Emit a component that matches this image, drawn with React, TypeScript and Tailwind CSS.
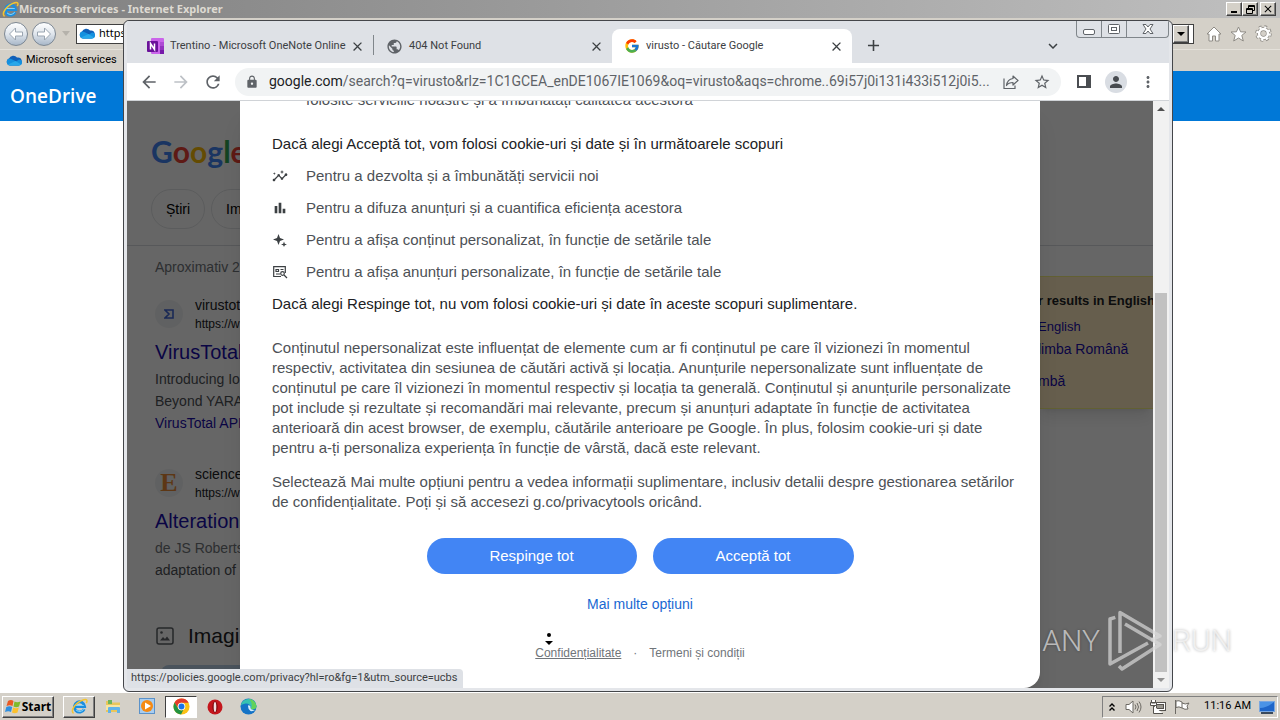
import React from 'react';
import {
  MdAdd,
  MdArrowBack,
  MdArrowForward,
  MdBarChart,
  MdClose,
  MdExpandMore,
  MdInsights,
  MdLock,
  MdMoreVert,
  MdPerson,
  MdPublic,
  MdRefresh,
  MdStarBorder,
} from 'react-icons/md';
import { FcGoogle } from 'react-icons/fc';

const CloudIcon = () => (
  <svg width="16" height="11" viewBox="0 0 16 11" className="shrink-0">
    <path d="M4 10.5A3.6 3.6 0 0 1 3 3.6 4.6 4.6 0 0 1 11 2.6 4 4 0 0 1 12.5 10.5Z" fill="#0f5fb8" />
    <path d="M4 10.5A3.6 3.6 0 0 1 3.2 3.5C6 4 8 5 10 6.5L13 4.5A3 3 0 0 1 13 10.5Z" fill="#1490df" />
    <path d="M2 9.5 9.5 6 14.8 9.3Q14 10.5 12.8 10.5H4Q2.8 10.5 2 9.5Z" fill="#28a8ea" />
  </svg>
);

const IeIcon = ({ size }: { size: number }) => (
  <svg width={size} height={size} viewBox="0 0 20 20" fill="none" className="shrink-0">
    <path d="M15.5 13A6 6 0 1 1 16 10H5" stroke="#1b8ee0" strokeWidth="3.4" />
    <path d="M15 12.8A5.5 5.5 0 0 1 6 14M5 8.8H15" stroke="#7fd0f8" strokeWidth="1.2" />
    <path d="M3 18C-1 15 5 5 15 2 19 1 19.5 3 18 6" stroke="#f4c430" strokeWidth="1.7" />
  </svg>
);

const OneNoteIcon = () => (
  <svg width="17" height="17" viewBox="0 0 17 17" className="shrink-0">
    <rect x="4" y="0" width="13" height="16" rx="1" fill="#ca64ea" />
    <rect x="13" y="4" width="4" height="4" fill="#ae4bd5" />
    <rect x="13" y="8" width="4" height="4" fill="#9332bf" />
    <rect x="13" y="12" width="4" height="4" fill="#7719aa" />
    <rect x="0" y="3" width="11" height="11" rx="1" fill="#6a1199" />
    <path d="M3.5 11.5V5.5L7.5 11.5V5.5" stroke="#fff" strokeWidth="1.5" fill="none" />
  </svg>
);

const ShareIcon = () => (
  <svg width="16" height="16" viewBox="0 0 16 16" fill="none" stroke="#5f6368" strokeWidth="1.2">
    <path d="M1 4.5V14.5H12V11.5" />
    <path d="M10 2 15 6.500 10 11V8.500C7 8.500 5 9.300 3.500 11.500 4 7.500 6 5 10 4.500Z" strokeLinejoin="round" />
  </svg>
);

const SparkIcon = () => (
  <svg width="16" height="16" viewBox="0 0 16 16" fill="#3c4043">
    <path d="M6.500 2 8 6 12 7.500 8 9 6.500 13 5 9 1 7.500 5 6Z" />
    <path d="M12 9.500 12.800 11.700 15 12.500 12.800 13.300 12 15 11.200 13.300 9 12.500 11.200 11.700Z" />
  </svg>
);

const AdSearchIcon = () => (
  <svg width="16" height="16" viewBox="0 0 16 16" fill="none" stroke="#3c4043" strokeWidth="1.2">
    <path d="M9 12.500H1.700V2.700H13.300V9" />
    <path d="M4 5.500H6.500V7.500H4ZM8.500 5.500H11.500M4 10H8" />
    <circle cx="10.500" cy="9.500" r="1.800" />
    <path d="M12 11 15 14" />
  </svg>
);

const PictureIcon = () => (
  <svg width="18" height="18" viewBox="0 0 18 18" fill="none" stroke="#5f6368" strokeWidth="1.5">
    <rect x="1" y="1" width="16" height="16" rx="2" />
    <path d="M4 13.500 7 10 9 12 11 9.500 14 13.500Z" fill="#5f6368" stroke="none" />
    <circle cx="5.500" cy="5.500" r="1.300" fill="#5f6368" stroke="none" />
  </svg>
);

const WindowsIcon = () => (
  <svg width="17" height="17" viewBox="0 0 17 17">
    <path d="M3 3Q6 1 8.500 3L7.500 8Q5 6.500 1.500 8Z" fill="#ea5a24" />
    <path d="M9.500 3.500Q12 5 15.500 3.500L14 8.500Q11 10 8.500 8.500Z" fill="#7fba2c" />
    <path d="M1.300 9Q4.500 7.500 7.200 9L6 14Q3.500 12.500 0 14Z" fill="#2f8fe0" />
    <path d="M8.200 9.500Q11 11 13.800 9.500L12.500 14.500Q9.500 16 7 14.500Z" fill="#fbc02d" />
  </svg>
);

const FolderIcon = () => (
  <svg width="17" height="17" viewBox="0 0 17 17">
    <path d="M1 3H6L7 4.500H15V14H1Z" fill="#e9c65a" />
    <path d="M3 2H7V6H3Z" fill="#6fb559" />
    <path d="M1 7H15V12H1Z" fill="#f8e6a0" />
    <path d="M3 15V10Q3 9 4 9H14Q15 9 15 10V15H12V12H6V15Z" fill="#62b3e8" />
  </svg>
);

const MediaIcon = () => (
  <svg width="17" height="17" viewBox="0 0 17 17">
    <rect x="0.5" y="0.5" width="15" height="15" fill="#a8cdf0" stroke="#5b92c9" />
    <circle cx="8" cy="8" r="6" fill="#f58a13" />
    <path d="M6 4.500 12 8 6 11.500Z" fill="#fff" />
  </svg>
);

const ChromeIcon = () => (
  <svg width="17" height="17" viewBox="0 0 18 18">
    <circle cx="9" cy="9" r="8.5" fill="#fbc116" />
    <path d="M1.600 4.800A8.500 8.500 0 0 1 16.600 5H9A4 4 0 0 0 5.300 11Z" fill="#e33b2e" />
    <path d="M1.600 4.800 5.500 11A4 4 0 0 0 11 12.500L8.500 17.500A8.500 8.500 0 0 1 1.600 4.800Z" fill="#229342" />
    <circle cx="9" cy="9" r="4" fill="#fff" />
    <circle cx="9" cy="9" r="3.1" fill="#1a73e8" />
  </svg>
);

const OperaIcon = () => (
  <svg width="16" height="16" viewBox="0 0 16 16">
    <circle cx="8" cy="8" r="7.5" fill="#c4161c" />
    <ellipse cx="8" cy="8" rx="2.6" ry="5.8" fill="#7d0a0e" />
    <ellipse cx="8" cy="8" rx="1.3" ry="5" fill="#f3dede" />
  </svg>
);

const EdgeIcon = () => (
  <svg width="17" height="17" viewBox="0 0 17 17">
    <circle cx="8.5" cy="8.5" r="8" fill="#1573c6" />
    <path d="M0.600 8A8 8 0 0 1 16.500 8C16.500 11 13.500 12 10.500 11 12 8 9 5 5.500 5.500 3 6 1 7 0.600 8Z" fill="#37c2b1" />
    <path d="M9 1A8 8 0 0 1 16.500 8C16.500 10.500 14 12 11 11 13 7 11 3 9 1Z" fill="#63d25b" />
    <path d="M8 8Q8 7 9.500 7.500 11 8 10.500 10 11 12 15 12 13 13.500 10.500 13 8 11.500 8 8Z" fill="#d8eefb" />
  </svg>
);

const NavArrow = ({ label, flip }: { label: string; flip?: boolean }) => (
  <button
    aria-label={label}
    className="flex h-6 w-6 items-center justify-center rounded-full border border-[#7d8894] bg-linear-to-b from-white via-[#dfe5ec] to-[#a9b8c9]"
  >
    <svg width="16" height="14" viewBox="0 0 16 14" className={flip ? 'rotate-180' : ''}>
      <path d="M7.500 1 1.500 7 7.500 13V9H14.500V5H7.500Z" fill="#fff" stroke="#9aa5b1" />
    </svg>
  </button>
);

const classicButton =
  'flex items-center justify-center border border-t-white border-l-white border-r-[#404040] border-b-[#404040] bg-[#d4d0c8] shadow-[inset_-1px_-1px_0_#808080]';

const IeWindow = () => (
  <section className="flex min-h-0 flex-1 flex-col bg-white">
    <header className="flex h-[18px] items-center bg-linear-to-r from-[#808080] to-[#c0c0c0] pr-1 pl-0.5">
      <IeIcon size={17} />
      <h1 className="flex-1 font-['Noto_Sans',sans-serif] text-[11px] leading-4 font-bold text-[#dedad2]">
        Microsoft services - Internet Explorer
      </h1>
      <button aria-label="Minimize" className={`${classicButton} h-3.5 w-4`}>
        <span className="mt-1.5 h-0.5 w-1.5 bg-black" />
      </button>
      <button aria-label="Restore" className={`${classicButton} h-3.5 w-4`}>
        <svg width="9" height="9" viewBox="0 0 9 9" fill="none" stroke="#000">
          <path d="M2.500 3V.5H8.500V5.500H6.500M2.500 1.500H8.500M.5 3.500H6.500V8.500H.5ZM.5 4.500H6.500" />
        </svg>
      </button>
      <button aria-label="Close" className={`${classicButton} ml-0.5 h-3.5 w-4`}>
        <MdClose size={12} />
      </button>
    </header>
    <nav className="flex h-[31px] items-center bg-[#d4d0c8] pr-2 pl-1">
      <div className="flex gap-1">
        <NavArrow label="Back" />
        <NavArrow label="Forward" flip />
      </div>
      <span className="mx-1.5 h-0 w-0 border-x-4 border-t-5 border-x-transparent border-t-[#b5b2ab]" />
      <div className="mr-3 flex h-5 flex-1 items-center gap-1 border border-[#404040] bg-white pl-0.5">
        <CloudIcon />
        <input
          aria-label="Address"
          defaultValue="https://onedrive.live.com"
          className="min-w-0 flex-1 font-['Noto_Sans',sans-serif] text-[11px] outline-none"
        />
        <button aria-label="Show addresses" className={`${classicButton} mr-1 h-[18px] w-4`}>
          <span className="h-0 w-0 border-x-4 border-t-4 border-x-transparent border-t-black" />
        </button>
      </div>
      <div className="flex gap-2">
        <button aria-label="Home">
          <svg width="16" height="16" viewBox="0 0 16 16" fill="#fff" stroke="#8e8b85">
            <path d="M8 1 15 8H13V15H9.500V10H6.500V15H3V8H1Z" />
          </svg>
        </button>
        <button aria-label="Favorites">
          <svg width="17" height="16" viewBox="0 0 17 16" fill="#fff" stroke="#8e8b85">
            <path d="M8.500 1 10.600 5.800 16 6 11.800 9.400 13.300 15 8.500 12 3.700 15 5.200 9.400 1 6 6.400 5.800Z" />
          </svg>
        </button>
        <button aria-label="Tools">
          <svg width="17" height="17" viewBox="0 0 17 17" fill="none">
            <circle cx="8.5" cy="8.5" r="6.5" stroke="#8e8b85" strokeWidth="3.5" strokeDasharray="2.6 2.5" />
            <circle cx="8.5" cy="8.5" r="4.5" stroke="#8e8b85" strokeWidth="4" />
            <circle cx="8.5" cy="8.5" r="6.3" stroke="#fff" strokeWidth="2.2" strokeDasharray="2.2 2.75" />
            <circle cx="8.5" cy="8.5" r="4.4" stroke="#fff" strokeWidth="2.5" />
          </svg>
        </button>
      </div>
    </nav>
    <div className="flex h-[22px] items-center gap-1 border-t border-[#e4e1da] bg-[#d4d0c8] pl-1.5">
      <CloudIcon />
      <a href="#onedrive" className="font-['Roboto',sans-serif] text-[11px] text-black">
        Microsoft services
      </a>
    </div>
    <div className="flex h-[50px] items-center bg-[#0078d7] pl-2.5 font-['Open_Sans',sans-serif] text-[19px] font-semibold text-white">
      OneDrive
    </div>
  </section>
);

interface TabProps {
  icon: React.ReactNode;
  title: string;
  active?: boolean;
}

const Tab = ({ icon, title, active }: TabProps) => (
  <div
    className={
      active
        ? 'flex h-[34px] w-60 items-center rounded-t-lg bg-white pr-2 pl-3'
        : 'flex h-[34px] w-[238px] items-center pr-2 pl-3'
    }
  >
    {icon}
    <span className="ml-1.5 flex-1 whitespace-nowrap">{title}</span>
    <button aria-label="Close tab">
      <MdClose size={15} color="#3c4043" />
    </button>
  </div>
);

const ChromeHeader = () => (
  <header>
    <div className="flex h-[42px] items-end bg-[#dee1e6] pl-2 font-['Roboto',sans-serif] text-[11px] text-[#3c4043]">
      <Tab icon={<OneNoteIcon />} title="Trentino - Microsoft OneNote Online" />
      <span className="mb-2 h-5 w-px bg-[#80868b]" />
      <Tab icon={<MdPublic size={17} color="#5f6368" />} title="404 Not Found" />
      <Tab icon={<FcGoogle size={16} />} title="virusto - Căutare Google" active />
      <button aria-label="New tab" className="mb-2 ml-3">
        <MdAdd size={19} />
      </button>
      <div className="flex-1" />
      <button aria-label="Search tabs" className="mr-3.5 mb-2">
        <MdExpandMore size={18} />
      </button>
      <div className="flex h-[17px] self-start rounded-b-sm border border-t-0 border-[#80868b]">
        <button aria-label="Minimize" className="flex w-[25px] items-center justify-center border-r border-[#80868b]">
          <span className="mt-1.5 h-1.5 w-3 rounded-xs border border-[#5f6368] bg-white" />
        </button>
        <button aria-label="Maximize" className="flex w-[25px] items-center justify-center border-r border-[#80868b]">
          <svg width="12" height="10" viewBox="0 0 12 10" fill="#fff" stroke="#5f6368">
            <rect x="0.5" y="0.5" width="11" height="9" rx="1" />
            <rect x="3.5" y="3.5" width="5" height="3" />
          </svg>
        </button>
        <button aria-label="Close" className="flex w-[41px] items-center justify-center">
          <svg width="12" height="10" viewBox="0 0 12 10" fill="#fff" stroke="#5f6368">
            <path d="M1 .5H4L6 3 8 .5H11L8 5 11 9.500H8L6 7 4 9.500H1L4 5Z" />
          </svg>
        </button>
      </div>
    </div>
    <div className="flex h-[38px] items-center border-b border-[#d0d3d7] bg-white px-3 text-[#5f6368]">
      <div className="flex gap-3">
        <button aria-label="Back">
          <MdArrowBack size={20} />
        </button>
        <button aria-label="Forward">
          <MdArrowForward size={20} color="#bdc1c6" />
        </button>
        <button aria-label="Reload">
          <MdRefresh size={20} />
        </button>
      </div>
      <div className="ml-3 flex h-7 min-w-0 flex-1 items-center rounded-full bg-[#f1f3f4] px-2.5">
        <MdLock size={14} />
        <div className="ml-2.5 flex-1 font-['Roboto',sans-serif] text-[14px] whitespace-nowrap">
          <span className="text-[#202124]">google.com</span>
          /search?q=virusto&amp;rlz=1C1GCEA_enDE1067IE1069&amp;oq=virusto&amp;aqs=chrome..69i57j0i131i433i512j0i5...
        </div>
        <button aria-label="Share" className="mr-3.5">
          <ShareIcon />
        </button>
        <button aria-label="Bookmark">
          <MdStarBorder size={18} />
        </button>
      </div>
      <button aria-label="Side panel" className="ml-4">
        <svg width="14" height="13" viewBox="0 0 14 13">
          <path d="M0 0H14V13H0ZM2 2V11H9V2Z" fill="#4a4d51" fillRule="evenodd" />
        </svg>
      </button>
      <button aria-label="Profile" className="ml-3.5 flex h-[22px] w-[22px] items-center justify-center rounded-full bg-[#d9dde3]">
        <MdPerson size={18} color="#474b50" />
      </button>
      <button aria-label="Menu" className="ml-3">
        <MdMoreVert size={18} />
      </button>
    </div>
  </header>
);

const SearchResults = () => (
  <div className="flex h-full flex-col overflow-hidden bg-white text-[14px] whitespace-nowrap">
    <div className="border-b border-[#dadce0]">
      <div className="w-[113px] overflow-hidden pl-6">
        <div className="flex h-[88px] items-end pb-[18px] font-['Lato',sans-serif] text-[30px] leading-10 font-bold">
          <span className="text-[#4285f4]">G</span>
          <span className="text-[#ea4335]">o</span>
          <span className="text-[#fbbc05]">o</span>
          <span className="text-[#4285f4]">g</span>
          <span className="text-[#34a853]">l</span>
          <span className="text-[#ea4335]">e</span>
        </div>
        <div className="flex gap-1.5 pb-4 text-black">
          <button className="h-10 w-[54px] shrink-0 rounded-full border border-[#e4e6e8]">Știri</button>
          <button className="h-10 w-20 shrink-0 rounded-full border border-[#e4e6e8] pl-3.5 text-left">Im</button>
        </div>
      </div>
    </div>
    <div className="flex min-h-0 flex-1 justify-between">
      <div className="w-[113px] overflow-hidden pt-[11px] pl-7 text-[#4d5156]">
        <p className="leading-5 text-[#70757a]">Aproximativ 2</p>
        <article className="pt-[18px]">
          <div className="flex items-center gap-3">
            <span className="flex h-7 w-7 shrink-0 items-center justify-center rounded-full bg-[#f1f3f4]">
              <svg width="10" height="10" viewBox="0 0 10 10" fill="none" stroke="#4066d5" strokeWidth="1.6">
                <path d="M1 1H9V9H1L5 5Z" />
              </svg>
            </span>
            <div className="text-[#202124]">
              <p className="leading-5">virustot</p>
              <p className="text-[12px] leading-[18px]">https://w</p>
            </div>
          </div>
          <h3 className="mt-1.5 text-[20px] leading-[26px] text-[#1a0dab]">VirusTotal</h3>
          <p className="mt-[3px] leading-[22px]">Introducing Io</p>
          <p className="leading-[22px]">Beyond YARA</p>
          <a href="#api" className="leading-[22px] text-[#1a0dab]">
            VirusTotal API
          </a>
        </article>
        <article className="pt-[30px]">
          <div className="flex items-center gap-3">
            <span className="flex h-7 w-7 shrink-0 items-center justify-center rounded-full bg-[#f1f3f4] font-['Liberation_Serif',serif] text-[26px] leading-7 font-bold text-[#e98a35]">
              E
            </span>
            <div className="text-[#202124]">
              <p className="leading-5">science</p>
              <p className="text-[12px] leading-[18px]">https://w</p>
            </div>
          </div>
          <h3 className="mt-1.5 text-[20px] leading-[26px] text-[#1a0dab]">Alterations</h3>
          <p className="mt-[3px] leading-[22px] text-[#70757a]">de JS Roberts</p>
          <p className="leading-[22px]">adaptation of</p>
        </article>
        <div className="mt-[42px] flex items-center gap-3.5 pl-px">
          <PictureIcon />
          <h3 className="text-[21px] leading-[26px] text-[#202124]">Imagi</h3>
        </div>
        <div className="mt-4 ml-1.5 h-10 w-40 rounded-lg bg-[#b8cfe6]" />
      </div>
      <aside className="mt-[30px] h-[133px] w-[115px] border-y border-[#f5ef80] bg-[#ffecc0] pt-4 shadow-lg">
        <p className="text-[13px] leading-4 font-bold text-[#202124]">r results in English</p>
        <div className="flex flex-col items-start text-[#1a0dab]">
          <a href="#en" className="mt-2 text-[13px] leading-5">
            English
          </a>
          <a href="#ro" className="leading-6">
            limba Română
          </a>
          <a href="#lang" className="mt-2 leading-6">
            mbă
          </a>
        </div>
      </aside>
    </div>
  </div>
);

const purposes = [
  { icon: <MdInsights size={16} color="#3c4043" />, text: 'Pentru a dezvolta și a îmbunătăți servicii noi' },
  { icon: <MdBarChart size={16} color="#3c4043" />, text: 'Pentru a difuza anunțuri și a cuantifica eficiența acestora' },
  { icon: <SparkIcon />, text: 'Pentru a afișa conținut personalizat, în funcție de setările tale' },
  { icon: <AdSearchIcon />, text: 'Pentru a afișa anunțuri personalizate, în funcție de setările tale' },
];

const ConsentDialog = () => (
  <div role="dialog" aria-label="Cookie" className="w-[800px] rounded-b-2xl bg-white px-8 pb-[25px] text-[15px] leading-5 text-[#4d5156] shadow-xl">
    <div className="flex h-[9px] items-end overflow-hidden pl-[34px]">
      <p>folosite serviciile noastre și a îmbunătăți calitatea acestora</p>
    </div>
    <p className="mt-6 text-[#202124]">Dacă alegi Acceptă tot, vom folosi cookie-uri și date și în următoarele scopuri</p>
    <ul className="my-3 flex flex-col gap-3">
      {purposes.map((item) => (
        <li key={item.text} className="flex items-center gap-[18px]">
          {item.icon}
          <span>{item.text}</span>
        </li>
      ))}
    </ul>
    <p className="text-[#202124]">Dacă alegi Respinge tot, nu vom folosi cookie-uri și date în aceste scopuri suplimentare.</p>
    <p className="mt-6 whitespace-nowrap">
      Conținutul nepersonalizat este influențat de elemente cum ar fi conținutul pe care îl vizionezi în momentul
      <br />
      respectiv, activitatea din sesiunea de căutări activă și locația. Anunțurile nepersonalizate sunt influențate de
      <br />
      conținutul pe care îl vizionezi în momentul respectiv și locația ta generală. Conținutul și anunțurile personalizate
      <br />
      pot include și rezultate și recomandări mai relevante, precum și anunțuri adaptate în funcție de activitatea
      <br />
      anterioară din acest browser, de exemplu, căutările anterioare pe Google. În plus, folosim cookie-uri și date
      <br />
      pentru a-ți personaliza experiența în funcție de vârstă, dacă este relevant.
    </p>
    <p className="mt-3.5 whitespace-nowrap">
      Selectează Mai multe opțiuni pentru a vedea informații suplimentare, inclusiv detalii despre gestionarea setărilor
      <br />
      de confidențialitate. Poți și să accesezi g.co/privacytools oricând.
    </p>
    <div className="mt-[26px] flex justify-center gap-4 text-white">
      <button className="h-9 w-[210px] rounded-full bg-[#4285f4]">Respinge tot</button>
      <button className="h-9 w-[201px] rounded-full bg-[#4285f4]">Acceptă tot</button>
    </div>
    <div className="mt-5 flex justify-center">
      <a href="#more" className="text-[14px] text-[#1967d2]">
        Mai multe opțiuni
      </a>
    </div>
    <footer className="mt-[29px] flex justify-center gap-3 text-[12px] text-[#70757a]">
      <a href="#privacy" className="relative underline">
        Confidențialitate
        <svg width="8" height="12" viewBox="0 0 8 12" className="absolute -top-2.5 left-2.5">
          <circle cx="4" cy="2" r="2" />
          <path d="M0 8H8L4 12Z" />
        </svg>
      </a>
      <span>·</span>
      <a href="#terms">Termeni și condiții</a>
    </footer>
  </div>
);

const ChromeWindow = () => (
  <section className="absolute top-5 right-[107px] bottom-7 left-[123px] flex flex-col overflow-hidden rounded-md border border-[#44464a] bg-[#e4e6ea] px-[3px] pb-[3px]">
    <ChromeHeader />
    <div className="flex min-h-0 flex-1">
      <main className="relative min-w-0 flex-1 overflow-hidden">
        <SearchResults />
        <div className="absolute inset-0 flex items-start justify-center bg-black/60">
          <ConsentDialog />
        </div>
        <div className="absolute bottom-0 left-0 flex h-[19px] w-[336px] items-center rounded-tr-sm bg-[#dee1e6] pl-1 font-['Roboto',sans-serif] text-[11px] whitespace-nowrap text-[#3c4043]">
          https://policies.google.com/privacy?hl=ro&amp;fg=1&amp;utm_source=ucbs
        </div>
      </main>
      <div className="flex w-4 flex-col items-center bg-[#f1f1f1] py-1.5">
        <span className="h-0 w-0 border-x-4 border-b-4 border-x-transparent border-b-[#505050]" />
        <span className="flex-1" />
        <span className="mb-1.5 h-[66%] w-3 bg-[#c1c1c1]" />
        <span className="h-0 w-0 border-x-4 border-t-4 border-x-transparent border-t-[#909090]" />
      </div>
    </div>
  </section>
);

const Taskbar = () => (
  <footer className="flex h-[27px] items-center bg-[#d4d0c8] px-0.5 font-['Noto_Sans',sans-serif] text-black">
    <button className={`${classicButton} h-[22px] w-[52px] text-[12px] font-bold`}>
      <WindowsIcon />
      Start
    </button>
    <button aria-label="Internet Explorer" className={`${classicButton} ml-[9px] h-[22px] w-8`}>
      <IeIcon size={17} />
    </button>
    <button aria-label="Explorer" className="ml-2.5">
      <FolderIcon />
    </button>
    <button aria-label="Media Player" className="ml-[17px]">
      <MediaIcon />
    </button>
    <button
      aria-label="Chrome"
      className="ml-[9px] flex h-[22px] w-8 items-center justify-center border border-t-[#404040] border-r-white border-b-white border-l-[#404040] bg-white"
    >
      <ChromeIcon />
    </button>
    <button aria-label="Opera" className="ml-2.5">
      <OperaIcon />
    </button>
    <button aria-label="Edge" className="ml-[17px]">
      <EdgeIcon />
    </button>
    <div className="ml-auto flex h-[22px] items-center border border-t-[#808080] border-r-white border-b-white border-l-[#808080] pr-0.5 pl-1.5">
      <svg width="6" height="8" viewBox="0 0 6 8" fill="none" stroke="#000" strokeWidth="1.4">
        <path d="M.5 3.500 3 1 5.500 3.500M.5 7.500 3 5 5.500 7.500" />
      </svg>
      <svg width="17" height="16" viewBox="0 0 17 16" className="ml-2.5" fill="#fff" stroke="#6d6a64">
        <path d="M1 5.500H4L8 2V14L4 10.500H1Z" />
        <path d="M10 5.500Q12 8 10 10.500M12 4Q15 8 12 12M14 2.500Q18 8 14 13.500" fill="none" />
      </svg>
      <svg width="16" height="16" viewBox="0 0 16 16" className="ml-2" fill="#fff" stroke="#55524d">
        <rect x="4.5" y="3.5" width="11" height="8" />
        <rect x="6.5" y="5.5" width="7" height="4" fill="#9a978f" />
        <path d="M1.500 1V4H5.500V1M.5 3.500H6.500V6.500H.5ZM3.500 7V14.500H13" />
      </svg>
      <svg width="16" height="16" viewBox="0 0 16 16" className="ml-2" fill="#fff" stroke="#6d6a64">
        <path d="M1.500 1V15M2 2Q5 1 8 3V9Q5 7 2 8.500ZM8 4Q11 6 15 4L13 7 14 10Q11 11 8 9" />
      </svg>
      <time className="ml-3.5 font-['Roboto',sans-serif] text-[11px]">11:16 AM</time>
      <svg width="16" height="14" viewBox="0 0 16 14" className="ml-2">
        <rect x="0.5" y="1.5" width="15" height="10" fill="#1f66c9" stroke="#7aa7df" />
        <path d="M1 8Q8 8 15 2V2H1Z" fill="#4a93e6" />
        <rect x="2" y="12" width="12" height="2" fill="#3b4a5c" />
      </svg>
    </div>
  </footer>
);

const Watermark = () => (
  <div className="pointer-events-none absolute right-12 bottom-[48px] flex items-center gap-2 font-['Roboto',sans-serif] text-[30px] leading-none font-light text-white/60 [text-shadow:0_0_3px_rgba(0,0,0,0.3)]">
    <span>ANY</span>
    <svg width="56" height="62" viewBox="0 0 56 62" fill="none" stroke="#d8d8d8" strokeOpacity="0.7" strokeWidth="3.5" strokeLinejoin="round">
      <path d="M7.300 7.300 2 9V54L40 33" />
      <path d="M12 43V2.500L52 26 43 30" />
      <path d="M17 14 52 34.500 14 59 11 56" />
    </svg>
    <span>RUN</span>
  </div>
);

const App = () => (
  <div className="relative flex h-screen flex-col overflow-hidden font-['Liberation_Sans',Arial,sans-serif]">
    <IeWindow />
    <ChromeWindow />
    <Taskbar />
    <Watermark />
  </div>
);

export default App;
